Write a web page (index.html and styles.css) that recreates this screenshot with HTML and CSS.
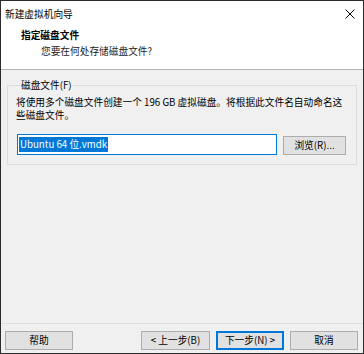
FILE: index.html
```html
<!DOCTYPE html>
<html lang="zh-CN">
<head>
    <meta charset="UTF-8">
    <title>新建虚拟机向导</title>
    <link rel="stylesheet" href="styles.css">
</head>
<body>
    <div class="window">
        <div class="titlebar">
            <span class="title">新建虚拟机向导</span>
            <svg class="close" width="10" height="10" viewBox="0 0 10 10">
                <path d="M0.5 0.5 L9.5 9.5 M9.5 0.5 L0.5 9.5" stroke="#000" stroke-width="1"/>
            </svg>
        </div>

        <div class="header">
            <h1>指定磁盘文件</h1>
            <p>您要在何处存储磁盘文件?</p>
        </div>

        <fieldset class="group">
            <legend>磁盘文件(F)</legend>
            <p class="desc">将使用多个磁盘文件创建一个 196 GB 虚拟磁盘。将根据此文件名自动命名这些磁盘文件。</p>
            <div class="file-row">
                <div class="textbox"><span class="selected">Ubuntu 64 位.vmdk</span></div>
                <button class="btn browse">浏览(R)...</button>
            </div>
        </fieldset>

        <div class="footer">
            <button class="btn">帮助</button>
            <div class="nav">
                <button class="btn">&lt; 上一步(B)</button>
                <button class="btn default">下一步(N) &gt;</button>
                <button class="btn">取消</button>
            </div>
        </div>
    </div>
</body>
</html>
```

FILE: styles.css
```css
html, body {
    margin: 0;
    padding: 0;
}

.window {
    width: 364px;
    height: 354px;
    box-sizing: border-box;
    border: 1px solid #2b2b2b;
    background-color: #f0f0f0;
    display: flex;
    flex-direction: column;
    font-family: "Noto Sans CJK SC", "Noto Sans", sans-serif;
    font-size: 9.7px;
    color: #000;
}

.titlebar {
    height: 25px;
    background-color: #fff;
    display: flex;
    align-items: center;
    justify-content: space-between;
    padding: 0 8px 0 4px;
}

.title {
    line-height: 14px;
}

.close {
    display: block;
}

.header {
    height: 44px;
    box-sizing: border-box;
    background-color: #fff;
    border-bottom: 1px solid #b4b4b4;
    padding: 2px 0 0 20px;
}

.header h1 {
    margin: 0;
    font-size: 9.7px;
    font-weight: bold;
    line-height: 14px;
}

.header p {
    margin: 2px 0 0 20px;
    line-height: 14px;
    color: #222;
}

.group {
    margin: 8px 6px 0 6px;
    padding: 4px 8px 9px 8px;
    border: 1px solid #dcdcdc;
    min-width: 0;
}

.group legend {
    padding: 0 1px;
    margin-left: 4px;
    line-height: 14px;
}

.desc {
    margin: 0;
    line-height: 13px;
    padding-right: 2px;
}

.file-row {
    display: flex;
    align-items: flex-end;
    margin-top: 12px;
    margin-left: 1px;
}

.textbox {
    width: 260px;
    height: 21px;
    box-sizing: border-box;
    border: 1px solid #0078d7;
    background-color: #fff;
    padding: 2px 1px;
    display: flex;
    align-items: center;
}

.selected {
    background-color: #0078d7;
    color: #fff;
    line-height: 15px;
    padding: 0 1px;
}

.btn {
    width: 68px;
    height: 19px;
    box-sizing: border-box;
    border: 1px solid #adadad;
    background-color: #e1e1e1;
    font-family: inherit;
    font-size: 9.7px;
    color: #000;
    padding: 0;
    line-height: 15px;
}

.browse {
    width: 63px;
    margin-left: 6px;
}

.footer {
    margin-top: auto;
    border-top: 1px solid #dfdfdf;
    padding: 7px 5px 3px 4px;
    display: flex;
    justify-content: space-between;
}

.nav {
    display: flex;
    gap: 6px;
}

.nav .btn:first-child {
    width: 69px;
}

.default {
    border-color: #0078d7;
    box-shadow: inset 0 0 0 1px #0078d7;
}
```
